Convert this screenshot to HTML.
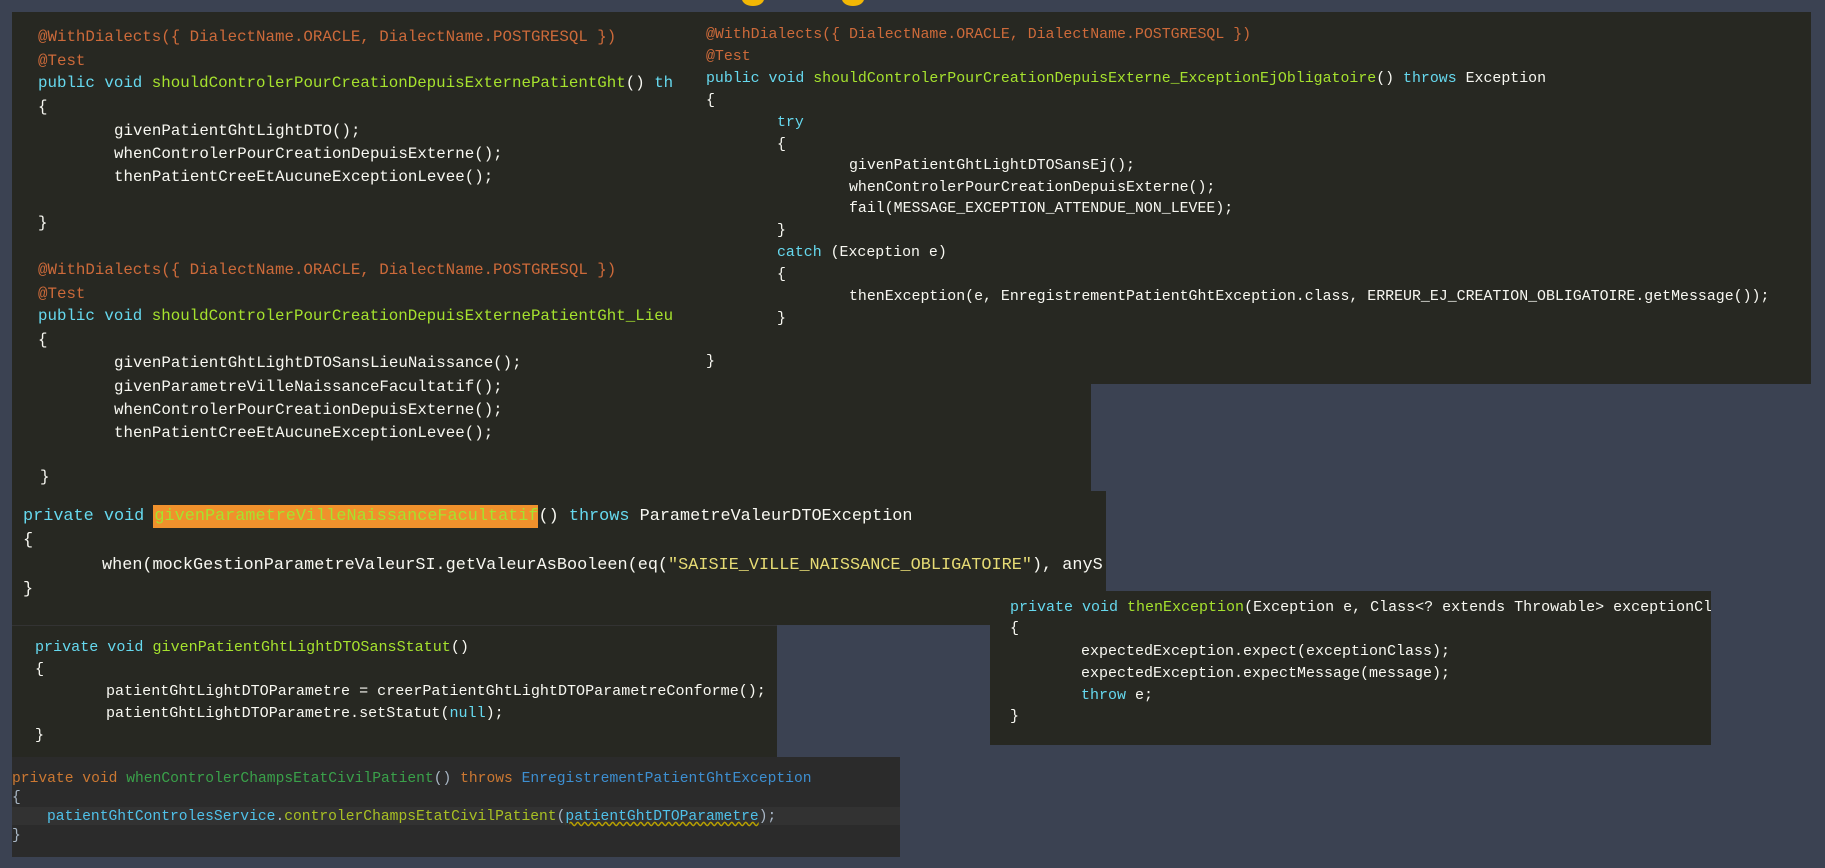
<!DOCTYPE html>
<html><head><meta charset="utf-8">
<style>
html,body{margin:0;padding:0}
body{width:1825px;height:868px;background:#3b4252;position:relative;overflow:hidden;font-family:"Liberation Mono",monospace}
.p{position:absolute;background:#272822;overflow:hidden}
.l{position:absolute;white-space:pre;line-height:20px;height:20px;color:#f8f8f2}
.a{color:#cd6a3a}.k{color:#66d9ef}.m{color:#a6e22e}.s{color:#e6db74}
</style></head><body>
<div style="position:absolute;left:742px;top:-8px;width:22px;height:14px;border-radius:50%;background:#f2b705"></div>
<div style="position:absolute;left:842px;top:-8px;width:22px;height:14px;border-radius:50%;background:#f2b705"></div>

<!-- Panel A -->
<div class="p" style="left:12px;top:12px;width:1079px;height:479px;font-size:15.8px">
<div class="l a" style="left:26px;top:15px">@WithDialects({ DialectName.ORACLE, DialectName.POSTGRESQL })</div>
<div class="l a" style="left:26px;top:39px">@Test</div>
<div class="l" style="left:26px;top:61px"><span class="k">public void </span><span class="m">shouldControlerPourCreationDepuisExternePatientGht</span>() <span class="k">th</span></div>
<div class="l" style="left:26px;top:85px">{</div>
<div class="l" style="left:102px;top:109px">givenPatientGhtLightDTO();</div>
<div class="l" style="left:102px;top:132px">whenControlerPourCreationDepuisExterne();</div>
<div class="l" style="left:102px;top:155px">thenPatientCreeEtAucuneExceptionLevee();</div>
<div class="l" style="left:26px;top:201px">}</div>
<div class="l a" style="left:26px;top:248px">@WithDialects({ DialectName.ORACLE, DialectName.POSTGRESQL })</div>
<div class="l a" style="left:26px;top:272px">@Test</div>
<div class="l" style="left:26px;top:294px"><span class="k">public void </span><span class="m">shouldControlerPourCreationDepuisExternePatientGht_Lieu</span></div>
<div class="l" style="left:26px;top:318px">{</div>
<div class="l" style="left:102px;top:341px">givenPatientGhtLightDTOSansLieuNaissance();</div>
<div class="l" style="left:102px;top:365px">givenParametreVilleNaissanceFacultatif();</div>
<div class="l" style="left:102px;top:388px">whenControlerPourCreationDepuisExterne();</div>
<div class="l" style="left:102px;top:411px">thenPatientCreeEtAucuneExceptionLevee();</div>
<div class="l" style="left:28px;top:455px">}</div>
</div>

<!-- Panel B -->
<div class="p" style="left:695px;top:12px;width:1116px;height:372px;font-size:14.9px">
<div class="l a" style="left:11px;top:13px">@WithDialects({ DialectName.ORACLE, DialectName.POSTGRESQL })</div>
<div class="l a" style="left:11px;top:35px">@Test</div>
<div class="l" style="left:11px;top:57px"><span class="k">public void </span><span class="m">shouldControlerPourCreationDepuisExterne_ExceptionEjObligatoire</span>() <span class="k">throws</span> Exception</div>
<div class="l" style="left:11px;top:79px">{</div>
<div class="l k" style="left:82px;top:101px">try</div>
<div class="l" style="left:82px;top:123px">{</div>
<div class="l" style="left:154px;top:144px">givenPatientGhtLightDTOSansEj();</div>
<div class="l" style="left:154px;top:166px">whenControlerPourCreationDepuisExterne();</div>
<div class="l" style="left:154px;top:187px">fail(MESSAGE_EXCEPTION_ATTENDUE_NON_LEVEE);</div>
<div class="l" style="left:82px;top:209px">}</div>
<div class="l" style="left:82px;top:231px"><span class="k">catch</span> (Exception e)</div>
<div class="l" style="left:82px;top:253px">{</div>
<div class="l" style="left:154px;top:275px">thenException(e, EnregistrementPatientGhtException.class, ERREUR_EJ_CREATION_OBLIGATOIRE.getMessage());</div>
<div class="l" style="left:82px;top:297px">}</div>
<div class="l" style="left:11px;top:340px">}</div>
</div>

<!-- Panel C -->
<div class="p" style="left:12px;top:491px;width:1094px;height:134px;font-size:16.85px">
<div style="position:absolute;left:141px;top:14px;width:385px;height:23px;background:#f0912c"></div>
<div class="l" style="left:11px;top:16px"><span class="k">private void </span><span class="m">givenParametreVilleNaissanceFacultatif</span>() <span class="k">throws</span> ParametreValeurDTOException</div>
<div class="l" style="left:11px;top:40px">{</div>
<div class="l" style="left:90px;top:65px">when(mockGestionParametreValeurSI.getValeurAsBooleen(eq(<span class="s">"SAISIE_VILLE_NAISSANCE_OBLIGATOIRE"</span>), anyS</div>
<div class="l" style="left:11px;top:89px">}</div>
</div>

<!-- Panel D -->
<div class="p" style="left:12px;top:625px;width:765px;height:132px;font-size:15.07px;border-top:1px solid #333">
<div class="l" style="left:23px;top:11px"><span class="k">private void </span><span class="m">givenPatientGhtLightDTOSansStatut</span>()</div>
<div class="l" style="left:23px;top:33px">{</div>
<div class="l" style="left:94px;top:55px">patientGhtLightDTOParametre = creerPatientGhtLightDTOParametreConforme();</div>
<div class="l" style="left:94px;top:77px">patientGhtLightDTOParametre.setStatut(<span class="k">null</span>);</div>
<div class="l" style="left:23px;top:99px">}</div>
</div>

<!-- Panel E -->
<div class="p" style="left:990px;top:591px;width:721px;height:154px;font-size:15px">
<div class="l" style="left:20px;top:7px"><span class="k">private void </span><span class="m">thenException</span>(Exception e, Class&lt;? extends Throwable&gt; exceptionCl</div>
<div class="l" style="left:20px;top:28px">{</div>
<div class="l" style="left:91px;top:51px">expectedException.expect(exceptionClass);</div>
<div class="l" style="left:91px;top:73px">expectedException.expectMessage(message);</div>
<div class="l" style="left:91px;top:95px"><span class="k">throw</span> e;</div>
<div class="l" style="left:20px;top:116px">}</div>
</div>

<!-- Panel F -->
<div class="p" style="left:12px;top:757px;width:888px;height:100px;background:#2b2b2b;font-size:14.65px">
<div style="position:absolute;left:0;top:50px;width:888px;height:18px;background:#323232"></div>
<div class="l" style="left:0;top:12px;color:#a9b7c6"><span style="color:#cc7832">private void </span><span style="color:#3aa14a">whenControlerChampsEtatCivilPatient</span>() <span style="color:#cc7832">throws </span><span style="color:#3d8fd1">EnregistrementPatientGhtException</span></div>
<div class="l" style="left:0;top:31px;color:#a9b7c6">{</div>
<div class="l" style="left:35px;top:50px;color:#a9b7c6"><span style="color:#4fc1e9">patientGhtControlesService</span>.<span style="color:#a8c023">controlerChampsEtatCivilPatient</span>(<span style="color:#4fc1e9;text-decoration:underline wavy #b8a000">patientGhtDTOParametre</span>);</div>
<div class="l" style="left:0;top:69px;color:#a9b7c6">}</div>
</div>
</body></html>
